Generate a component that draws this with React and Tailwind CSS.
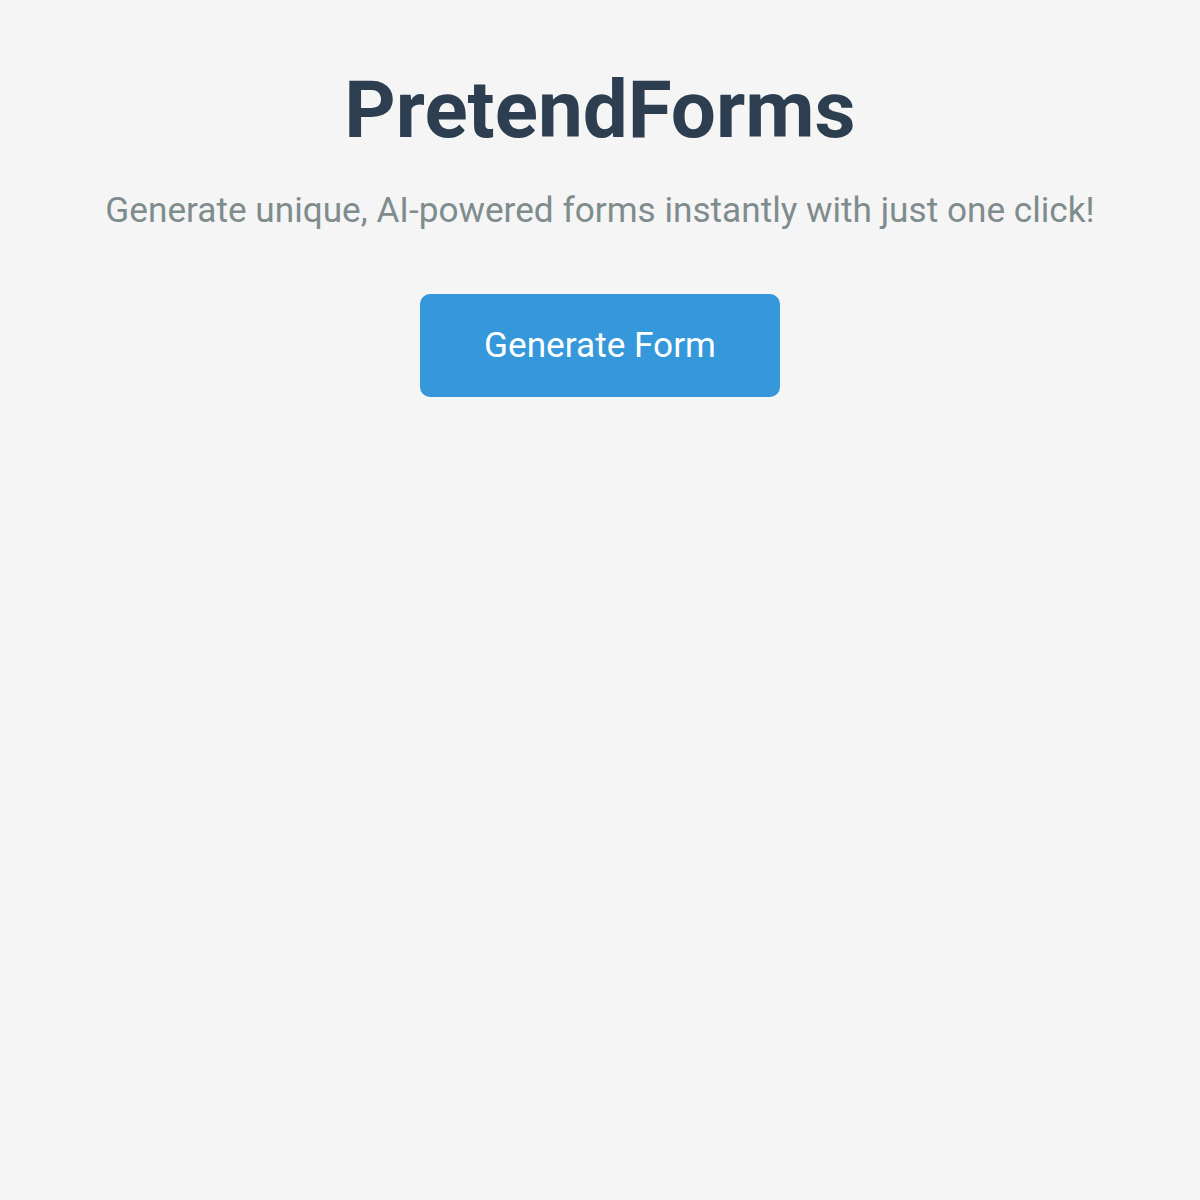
import React from 'react';

export default function App() {
  return (
    <div className="min-h-screen bg-[#f5f5f5] font-['Roboto',sans-serif]">
      <div className="flex flex-col items-center pt-[62px] text-center">
        <h1 className="text-[80px] font-bold leading-[1.2] text-[#2c3e50]">PretendForms</h1>
        <p className="mt-[28px] text-[35.2px] leading-[1.4] text-[#7f8c8d]">
          Generate unique, AI-powered forms instantly with just one click!
        </p>
        <button
          type="button"
          className="mt-[59px] w-[360px] h-[103px] rounded-[10px] bg-[#3498db] text-[35.2px] text-white"
        >
          Generate Form
        </button>
      </div>
    </div>
  );
}
